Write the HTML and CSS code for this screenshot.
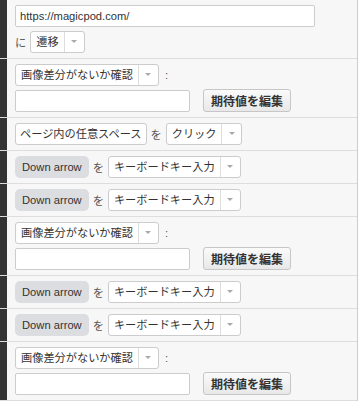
FILE: index.html
```html
<!DOCTYPE html>
<html lang="ja">
<head>
    <meta charset="UTF-8">
    <meta name="viewport" content="width=device-width, initial-scale=1.0">
    <title>MagicPod steps</title>
    <link rel="stylesheet" href="styles.css">
</head>
<body>
    <div class="steps">
        <div class="step">
            <div class="handle"></div>
            <div class="body">
                <div class="line"><input class="field url" type="text" value="https://magicpod.com/"></div>
                <div class="line">
                    <span class="word">に</span>
                    <span class="select"><span class="val">遷移</span><span class="caret"></span></span>
                </div>
            </div>
        </div>

        <div class="step">
            <div class="handle"></div>
            <div class="body">
                <div class="line">
                    <span class="select"><span class="val">画像差分がないか確認</span><span class="caret"></span></span>
                    <span class="word colon">:</span>
                </div>
                <div class="line">
                    <input class="field expected" type="text" value="">
                    <button class="edit">期待値を編集</button>
                </div>
            </div>
        </div>

        <div class="step">
            <div class="handle"></div>
            <div class="body">
                <div class="line">
                    <span class="target">ページ内の任意スペース</span>
                    <span class="word">を</span>
                    <span class="select"><span class="val">クリック</span><span class="caret"></span></span>
                </div>
            </div>
        </div>

        <div class="step">
            <div class="handle"></div>
            <div class="body">
                <div class="line">
                    <span class="key">Down arrow</span>
                    <span class="word">を</span>
                    <span class="select"><span class="val">キーボードキー入力</span><span class="caret"></span></span>
                </div>
            </div>
        </div>

        <div class="step">
            <div class="handle"></div>
            <div class="body">
                <div class="line">
                    <span class="key">Down arrow</span>
                    <span class="word">を</span>
                    <span class="select"><span class="val">キーボードキー入力</span><span class="caret"></span></span>
                </div>
            </div>
        </div>

        <div class="step">
            <div class="handle"></div>
            <div class="body">
                <div class="line">
                    <span class="select"><span class="val">画像差分がないか確認</span><span class="caret"></span></span>
                    <span class="word colon">:</span>
                </div>
                <div class="line">
                    <input class="field expected" type="text" value="">
                    <button class="edit">期待値を編集</button>
                </div>
            </div>
        </div>

        <div class="step">
            <div class="handle"></div>
            <div class="body">
                <div class="line">
                    <span class="key">Down arrow</span>
                    <span class="word">を</span>
                    <span class="select"><span class="val">キーボードキー入力</span><span class="caret"></span></span>
                </div>
            </div>
        </div>

        <div class="step">
            <div class="handle"></div>
            <div class="body">
                <div class="line">
                    <span class="key">Down arrow</span>
                    <span class="word">を</span>
                    <span class="select"><span class="val">キーボードキー入力</span><span class="caret"></span></span>
                </div>
            </div>
        </div>

        <div class="step">
            <div class="handle"></div>
            <div class="body">
                <div class="line">
                    <span class="select"><span class="val">画像差分がないか確認</span><span class="caret"></span></span>
                    <span class="word colon">:</span>
                </div>
                <div class="line">
                    <input class="field expected" type="text" value="">
                    <button class="edit">期待値を編集</button>
                </div>
            </div>
        </div>
    </div>
</body>
</html>
```

FILE: styles.css
```css
body {
    margin: 0;
    font-family: "Liberation Sans", "Noto Sans CJK JP", sans-serif;
    font-size: 11.2px;
    color: #333;
    background: #fff;
}
.steps {
    width: 358px;
    box-sizing: border-box;
    border-right: 1px solid #ccc;
    background: #f7f7f7;
}
.step {
    display: flex;
    border-bottom: 1px solid #ddd;
}
.handle {
    width: 7px;
    background: #333;
}
.body {
    flex: 1;
    display: flex;
    flex-direction: column;
    gap: 3px;
    padding: 4px 0 5px 8px;
}
.line {
    display: flex;
    align-items: center;
    gap: 4px;
    height: 23px;
}
.word {
    color: #555;
}
.colon {
    margin-left: 2px;
}
.field {
    height: 22px;
    box-sizing: border-box;
    margin: 0;
    padding: 0 4px;
    border: 1px solid #ccc;
    border-radius: 2px;
    background: #fff;
    font: inherit;
    color: #333;
    outline: none;
}
.url {
    width: 300px;
}
.expected {
    width: 175px;
}
.select {
    display: flex;
    height: 22px;
    box-sizing: border-box;
    border: 1px solid #ccc;
    border-radius: 3px;
    background: #fff;
}
.select .val {
    padding: 0 5px;
    line-height: 20px;
}
.caret {
    width: 19px;
    border-left: 1px solid #ddd;
    display: flex;
    align-items: center;
    justify-content: center;
}
.caret::after {
    content: "";
    border-left: 3px solid transparent;
    border-right: 3px solid transparent;
    border-top: 3px solid #aaa;
}
.target {
    height: 22px;
    box-sizing: border-box;
    padding: 0 4px;
    line-height: 20px;
    border: 1px solid #ccc;
    border-radius: 3px;
    background: #fff;
}
.key {
    height: 22px;
    line-height: 22px;
    padding: 0 7px;
    border-radius: 5px;
    background: #dcdde0;
}
.edit {
    height: 23px;
    margin: 0 0 0 9px;
    padding: 0 7px;
    border: 1px solid #c6c6c6;
    border-radius: 3px;
    background: linear-gradient(#fafafa, #e8e8e8);
    font-family: inherit;
    font-size: 12px;
    font-weight: bold;
    color: #333;
}
```
